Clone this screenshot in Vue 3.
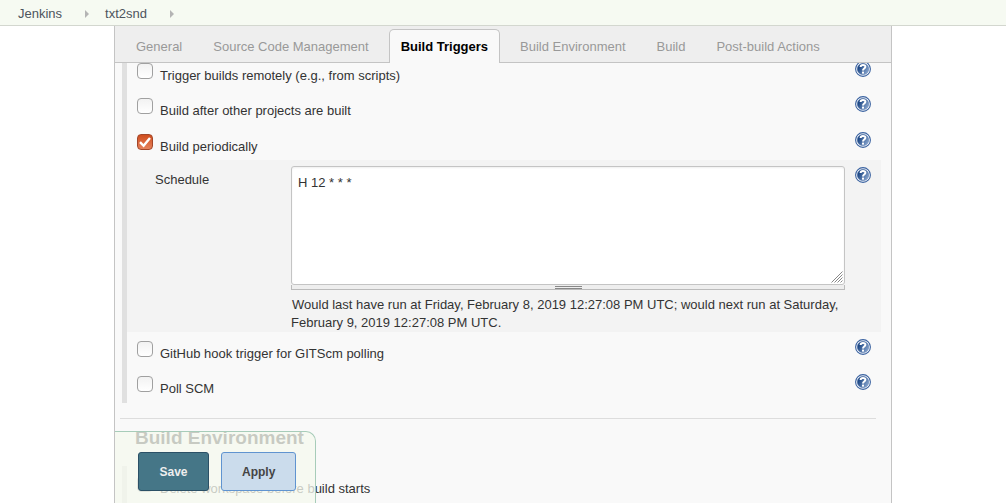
<script setup>
import { ref } from 'vue'

const crumbs = ['Jenkins', 'txt2snd']
const tabs = [
  'General',
  'Source Code Management',
  'Build Triggers',
  'Build Environment',
  'Build',
  'Post-build Actions',
]
const activeTab = ref('Build Triggers')
const schedule = ref('H 12 * * *')
const triggers = ref([
  { id: 'remote', label: 'Trigger builds remotely (e.g., from scripts)', checked: false },
  { id: 'upstream', label: 'Build after other projects are built', checked: false },
  { id: 'timer', label: 'Build periodically', checked: true },
  { id: 'github', label: 'GitHub hook trigger for GITScm polling', checked: false },
  { id: 'scm', label: 'Poll SCM', checked: false },
])
const cleanup = ref(false)
</script>

<template>
  <div class="page">
    <svg class="defs" aria-hidden="true">
      <defs>
        <linearGradient id="help-fill" x1="0" y1="0.2" x2="1" y2="0.8">
          <stop offset="0.2" stop-color="#204a87" />
          <stop offset="1" stop-color="#8fabd2" />
        </linearGradient>
        <symbol id="help-icon" viewBox="0 0 16 16">
          <circle cx="8" cy="8" r="7.4" fill="#fff" stroke="#3a62a0" stroke-width="1.1" />
          <circle cx="8" cy="8" r="5.8" fill="url(#help-fill)" stroke="#4a70aa" stroke-width="0.4" />
          <path d="M5.6 6C5.6 3.3 10.4 3.3 10.4 5.8C10.4 7.5 8 7.4 8 9.4" fill="none" stroke="#fff" stroke-width="2" />
          <rect x="7" y="10.6" width="2" height="2" fill="#fff" />
        </symbol>
      </defs>
    </svg>

    <nav class="crumbs" aria-label="Breadcrumb">
      <template v-for="crumb in crumbs" :key="crumb">
        <a href="#">{{ crumb }}</a>
        <svg class="arrow" viewBox="0 0 4 8" aria-hidden="true"><path d="M0 0L4 4L0 8Z" fill="#b4b4b4" /></svg>
      </template>
    </nav>

    <main class="panel">
      <div class="tabs" role="tablist">
        <button
          v-for="tab in tabs"
          :key="tab"
          type="button"
          role="tab"
          class="tab"
          :class="{ active: tab === activeTab }"
          :aria-selected="tab === activeTab"
          @click="activeTab = tab"
        >{{ tab }}</button>
      </div>

      <form class="content" @submit.prevent>
        <section class="group triggers">
          <template v-for="t in triggers" :key="t.id">
            <div class="row" :class="{ open: t.id === 'timer' }">
              <span class="check">
                <input :id="t.id" v-model="t.checked" type="checkbox" />
                <svg v-if="t.checked" viewBox="0 0 16 16" aria-hidden="true">
                  <path d="M3 8.2L6.6 11.8L13 4" fill="none" stroke="#fff" stroke-width="2.4" />
                </svg>
              </span>
              <label :for="t.id">{{ t.label }}</label>
              <a href="#" class="help" aria-label="Help"><svg><use href="#help-icon" /></svg></a>
            </div>
            <div v-if="t.id === 'timer' && t.checked" class="nested">
              <label class="name" for="schedule">Schedule</label>
              <div class="setting">
                <div class="area">
                  <textarea id="schedule" v-model="schedule" spellcheck="false"></textarea>
                  <svg class="grip" viewBox="0 0 12 12" aria-hidden="true">
                    <path d="M0.5 11.5L11.5 0.5M3.5 11.5L11.5 3.5M6.5 11.5L11.5 6.5M9.5 11.5L11.5 9.5" stroke="#888" fill="none" />
                  </svg>
                </div>
                <div class="handle"><span></span></div>
                <p>Would last have run at Friday, February 8, 2019 12:27:08 PM UTC; would next run at Saturday, February 9, 2019 12:27:08 PM UTC.</p>
              </div>
              <a href="#" class="help" aria-label="Help"><svg><use href="#help-icon" /></svg></a>
            </div>
          </template>
        </section>

        <h2>Build Environment</h2>
        <section class="group">
          <div class="row">
            <span class="check"><input id="cleanup" v-model="cleanup" type="checkbox" /></span>
            <label for="cleanup">Delete workspace before build starts</label>
          </div>
        </section>
      </form>

      <div class="actions">
        <button type="button" class="save">Save</button>
        <button type="button" class="apply">Apply</button>
      </div>
    </main>
  </div>
</template>

<style>
body {
  margin: 0;
  overflow: hidden;
}
</style>

<style scoped>
.page {
  display: flex;
  flex-direction: column;
  height: 100vh;
  background: #fff;
  color: #333;
  font: 13px/18px "Liberation Sans", Arial, Helvetica, sans-serif;
}
.page * {
  box-sizing: border-box;
}
.defs {
  position: absolute;
  width: 0;
  height: 0;
}
a {
  color: inherit;
  text-decoration: none;
}
button,
textarea {
  font: inherit;
}
.crumbs {
  display: flex;
  align-items: center;
  flex: none;
  height: 26px;
  padding: 2px 18px 0;
  border-bottom: 1px solid #d3d7cf;
  background: #f6faf2;
  color: #4d545d;
}
.arrow {
  width: 4px;
  height: 8px;
  margin: 0 16px 0 23px;
}
.panel {
  position: relative;
  display: flex;
  flex-direction: column;
  flex: 1;
  min-height: 0;
  margin: 0 114px;
  border: solid #c4c4c4;
  border-width: 0 1px;
  background: #f9f9f9;
}
.tabs {
  display: flex;
  gap: 9px;
  flex: none;
  height: 37px;
  padding: 3px 10px 0;
  border-bottom: 1px solid #c4c4c4;
  background: #eee;
}
.tab {
  height: 34px;
  padding: 0 10px;
  border: 1px solid transparent;
  border-bottom: 0;
  border-radius: 5px 5px 0 0;
  background: none;
  color: #999;
  white-space: nowrap;
}
.tab.active {
  padding: 0 11px;
  border-color: #c4c4c4;
  background: #f9f9f9;
  color: #000;
  font-weight: bold;
}
.content {
  flex: 1;
  min-height: 0;
  padding: 0 10px 0 7px;
  overflow: hidden;
}
.group {
  padding-top: 2px;
  border-left: 5px solid #e0e0e0;
}
.triggers {
  margin-top: -10px;
}
.row {
  display: flex;
  align-items: flex-start;
  height: 35px;
  padding: 0 10px;
}
.row.open {
  height: 34px;
  margin-top: 1px;
}
.check {
  display: grid;
  margin: 8px 7px 0 0;
}
.check > * {
  grid-area: 1 / 1;
  width: 16px;
  height: 16px;
}
.check svg {
  pointer-events: none;
}
.check input {
  margin: 0;
  appearance: none;
  border: 1px solid #a0a0a0;
  border-radius: 4px;
  background: linear-gradient(#f2f2f2, #fff);
}
.check input:checked {
  border-color: #a3472a;
  background: linear-gradient(#cf4d1e, #e6825c);
}
.row label {
  margin-top: 12px;
}
.help {
  flex: none;
  width: 16px;
  height: 16px;
  margin: 6px 0 0 auto;
}
.help svg {
  display: block;
  width: 16px;
  height: 16px;
}
.nested {
  display: flex;
  align-items: flex-start;
  margin: 0 0 1px;
  padding: 0 10px 0 28px;
  background: #f3f3f3;
}
.name {
  flex: none;
  width: 136px;
  padding-top: 11px;
}
.setting {
  flex: 1;
  min-width: 0;
  margin-right: 10px;
  padding-top: 6px;
}
.area {
  position: relative;
}
textarea {
  display: block;
  width: 100%;
  height: 119px;
  padding: 7px 6px;
  border: 1px solid #c4c4c4;
  border-radius: 3px;
  outline: 0;
  background: #fff;
  box-shadow: inset 0 1px 2px #0001;
  color: #333;
  resize: none;
}
.grip {
  position: absolute;
  right: 2px;
  bottom: 2px;
  width: 12px;
  height: 12px;
}
.handle {
  display: flex;
  justify-content: center;
  height: 5px;
  border: 1px solid #bbb;
  border-top: 0;
  background: #eee;
}
.handle span {
  width: 27px;
  height: 3px;
  margin-top: 1px;
  border: solid #888;
  border-width: 1px 0;
}
p {
  margin: 6px 0 0;
  text-indent: 1px;
}
.nested .help {
  margin-top: 7px;
}
h2 {
  margin: 15px 5px 16px -2px;
  padding: 7px 15px 0;
  border-top: 1px solid #ddd;
  color: #333;
  font-size: 19px;
  line-height: 24px;
}
.actions {
  position: absolute;
  bottom: 0;
  left: 0;
  display: flex;
  gap: 12px;
  padding: 20px 19px 12px 23px;
  border: solid #a7ccb9;
  border-width: 1px 1px 0 0;
  border-radius: 0 10px 0 0;
  background: #f4f8eec4;
}
.actions button {
  min-width: 71px;
  height: 39px;
  padding: 0 20px;
  border: 1px solid #6094d0;
  border-radius: 3px;
  background: #cbdcec;
  color: #444;
  font-size: 12px;
  font-weight: bold;
}
.actions .save {
  border-color: #2b5066;
  background: #457687;
  color: #eee;
}
</style>
